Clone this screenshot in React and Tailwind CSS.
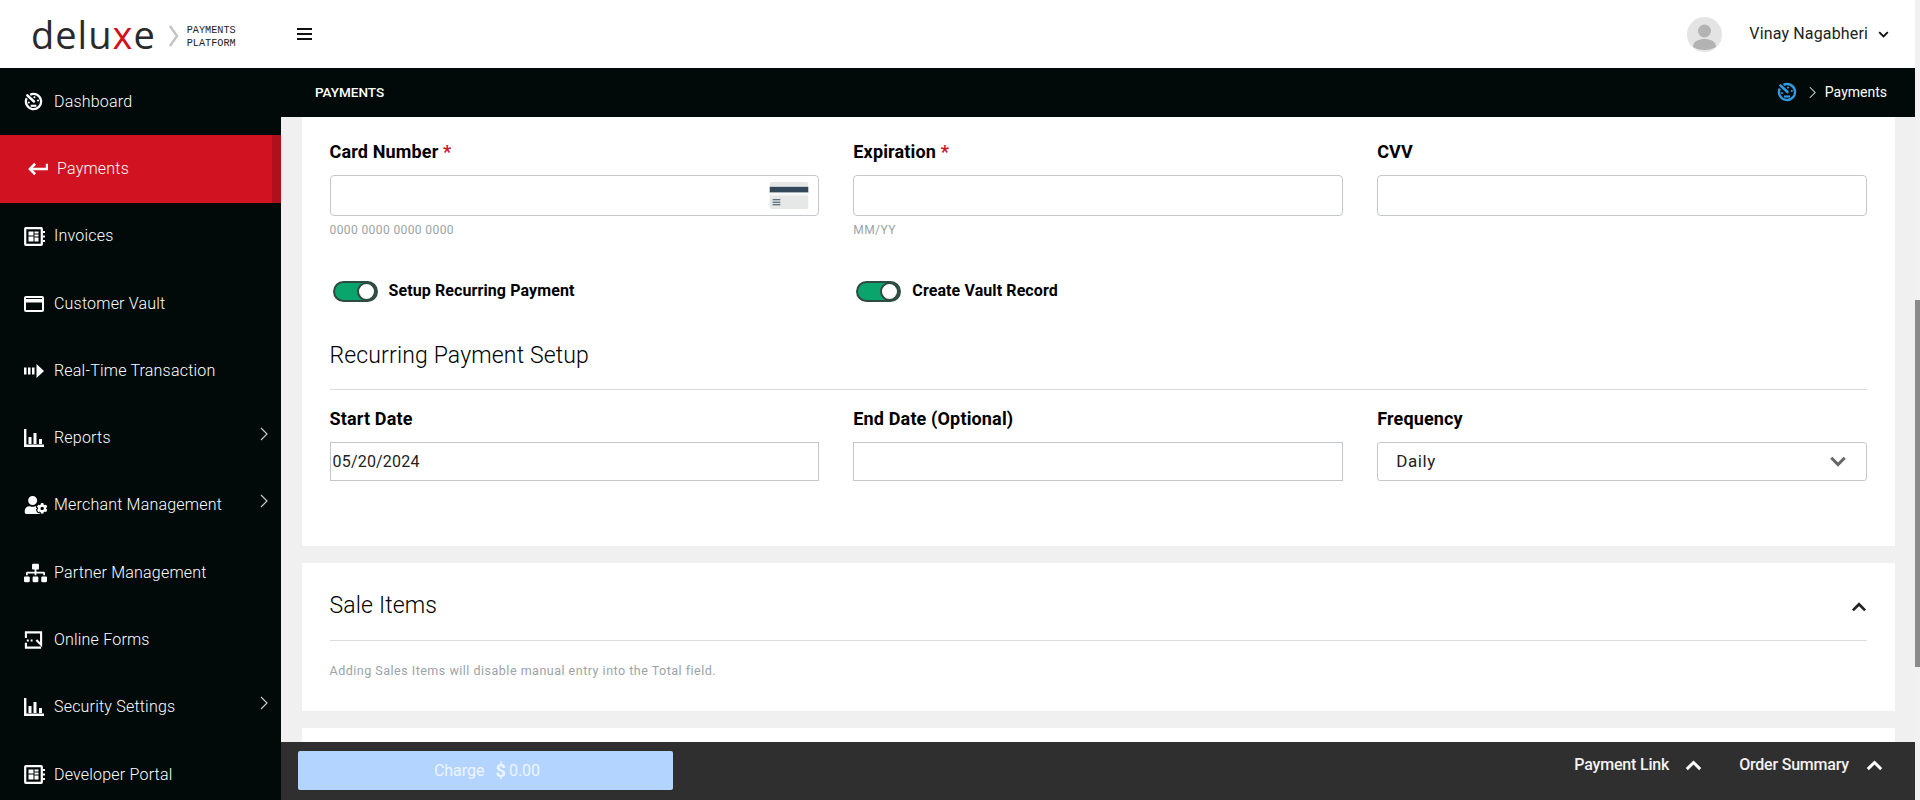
import { FaUserCog, FaSitemap } from "react-icons/fa";

const DashIcon = ({ className }) => (
    <svg viewBox="0 0 20 20" className={className} fill="none">
        <path d="M6.5 2.8A8 8 0 1 1 2.8 6.5" stroke="currentColor" strokeWidth="2.4" />
        <path d="M3.5 3.5l7 6.5" stroke="currentColor" strokeWidth="2.6" strokeLinecap="round" />
        <circle cx="11" cy="5.5" r="1.1" fill="currentColor" />
        <circle cx="14.8" cy="9" r="1.1" fill="currentColor" />
        <circle cx="5" cy="11" r="1.1" fill="currentColor" />
        <path d="M7 14.5h6" stroke="currentColor" strokeWidth="2.2" />
    </svg>
);

const ReturnIcon = () => (
    <svg viewBox="0 0 22 14" className="w-[21px] h-[14px]" fill="none" stroke="currentColor" strokeWidth="2.6">
        <path d="M21 1.5v5.5H3" />
        <path d="M8.5 1.5L3 7l5.5 5.5" />
    </svg>
);

const InvoiceIcon = () => (
    <svg viewBox="0 0 21 19" className="w-[21px] h-[19px]" fill="none">
        <rect x="1.2" y="1.2" width="16.6" height="16.6" rx="0.5" stroke="currentColor" strokeWidth="2.2" />
        <path d="M4.5 4.5h5v4h-5zM10.5 4.5h4v2h-4zM10.5 7.5h4v2h-4zM4.5 9.5h5v5h-5zM10.5 10.5h4v4h-4z" fill="currentColor" />
        <path d="M19 4h2v2h-2zM19 8.5h2v2h-2zM19 13h2v2h-2z" fill="currentColor" />
    </svg>
);

const CardIcon = () => (
    <svg viewBox="0 0 20 16" className="w-5 h-4" fill="none">
        <rect x="1" y="1" width="18" height="14" rx="1" stroke="currentColor" strokeWidth="2" />
        <rect x="1" y="3" width="18" height="3.5" fill="currentColor" />
    </svg>
);

const RealTimeIcon = () => (
    <svg viewBox="0 0 20 14" className="w-5 h-[14px]" fill="currentColor">
        <path d="M0 3.5h2.5v7H0zM4 3.5h2.5v7H4zM8 3.5h2.5v7H8zM12.5 0L20 7l-7.5 7z" />
    </svg>
);

const BarsIcon = () => (
    <svg viewBox="0 0 20 18" className="w-5 h-[18px]" fill="currentColor">
        <path d="M0 0h2.4v15.6H20V18H0zM4.5 8h3v7h-3zM9.5 4h3v11h-3zM15 10h3v5h-3z" />
    </svg>
);

const FormIcon = () => (
    <svg viewBox="0 0 20 20" className="w-[19px] h-5" fill="none" stroke="currentColor" strokeWidth="2.2">
        <path d="M2 8V2h16v13l-5-5" />
        <path d="M2 13v5h16" />
        <path d="M3 10.5h2M7 10.5h2" />
    </svg>
);

const Chevron = ({ className }) => (
    <svg viewBox="0 0 8 14" className={className} fill="none" stroke="currentColor" strokeWidth="1.2">
        <path d="M1 1l6 6-6 6" />
    </svg>
);

const Caret = ({ up, className }) => (
    <svg viewBox="0 0 14 9" className={className} fill="none" stroke="currentColor" strokeWidth="2.4">
        <path d={up ? "M1.5 7.5L7 2l5.5 5.5" : "M1.5 1.5L7 7l5.5-5.5"} />
    </svg>
);

const menu = [
    { label: "Dashboard", icon: <DashIcon className="w-[19px] h-[19px]" /> },
    { label: "Payments", icon: <ReturnIcon />, active: true },
    { label: "Invoices", icon: <InvoiceIcon /> },
    { label: "Customer Vault", icon: <CardIcon /> },
    { label: "Real-Time Transaction", icon: <RealTimeIcon /> },
    { label: "Reports", icon: <BarsIcon />, more: true },
    { label: "Merchant Management", icon: <FaUserCog className="w-6 h-[18px]" />, more: true },
    { label: "Partner Management", icon: <FaSitemap className="w-[23px] h-5" /> },
    { label: "Online Forms", icon: <FormIcon /> },
    { label: "Security Settings", icon: <BarsIcon />, more: true },
    { label: "Developer Portal", icon: <InvoiceIcon /> },
];

function Sidebar() {
    return (
        <aside className="w-[281px] shrink-0 bg-[#010a08] text-white overflow-hidden">
            {menu.map((item) => (
                <div
                    key={item.label}
                    className={
                        item.active
                            ? "h-[67.3px] flex items-center bg-[#d11220] border-r-[9px] border-[#b0101c] pl-[27px] gap-[9px] text-[16px] text-white"
                            : "h-[67.3px] flex items-center pl-6 pr-[13px] text-[16px]"
                    }
                >
                    {item.active ? (
                        item.icon
                    ) : (
                        <span className="w-[30px] flex items-center">{item.icon}</span>
                    )}
                    <span className="font-light tracking-[0.2px]">{item.label}</span>
                    {item.more && <Chevron className="ml-auto w-[8px] h-[14px] text-[#c8c8c8] -mt-2" />}
                </div>
            ))}
        </aside>
    );
}

function Field({ label, required, hint, children }) {
    return (
        <div>
            <div className="h-[24px] leading-[24px] -mt-[1px] mb-[1px] text-[18px] font-bold text-black tracking-[0.15px]">
                {label} {required && <span className="text-[#d11220]">*</span>}
            </div>
            {children}
            {hint && <div className="mt-[5px] text-[12px] tracking-[0.4px] text-[#9aa3a8]">{hint}</div>}
        </div>
    );
}

function Toggle({ label }) {
    return (
        <div className="flex items-center gap-[11px] pl-[3px]">
            <div className="w-[45px] h-[21px] rounded-full bg-[#0aa56c] border-2 border-[#2f4a42] flex items-center justify-end">
                <div className="w-[19px] h-[19px] rounded-full bg-white border-2 border-[#2f4a42]" />
            </div>
            <span className="text-[16px] font-bold text-black tracking-[0.1px]">{label}</span>
        </div>
    );
}

function PaymentCard() {
    return (
        <section className="bg-white h-[429px] pl-[27.5px] pr-7 pt-[24px]">
            <div className="grid grid-cols-3 gap-x-[34px]">
                <Field label="Card Number" required hint="0000 0000 0000 0000">
                    <div className="mt-[11px] h-[41px] border border-[#c4c8cc] rounded flex items-center justify-end pr-[9px]">
                        <svg viewBox="0 0 40 28" className="w-[40px] h-[27px]">
                            <rect width="40" height="28" rx="2" fill="#e6e8e8" />
                            <rect y="5" width="40" height="6" fill="#33475b" />
                            <rect y="11" width="40" height="3" fill="#f7f7f7" />
                            <path d="M3 18h8v1H3zM3 20.5h8v1H3zM3 23h8v1H3z" fill="#33475b" />
                        </svg>
                    </div>
                </Field>
                <Field label="Expiration" required hint="MM/YY">
                    <div className="mt-[11px] h-[41px] border border-[#c4c8cc] rounded" />
                </Field>
                <Field label="CVV">
                    <div className="mt-[11px] h-[41px] border border-[#c4c8cc] rounded" />
                </Field>
            </div>
            <div className="grid grid-cols-3 gap-x-[34px] mt-[40px]">
                <Toggle label="Setup Recurring Payment" />
                <Toggle label="Create Vault Record" />
            </div>
            <h2 className="mt-[37px] text-[23px] leading-[32px] font-light text-black tracking-[0.15px] pb-[17px] border-b border-[#dcdcdc]">
                Recurring Payment Setup
            </h2>
            <div className="grid grid-cols-3 gap-x-[34px] mt-[18px]">
                <Field label="Start Date">
                    <div className="mt-[11px] h-[39px] border border-[#c4c8cc] flex items-center pl-[2px] text-[16px] text-[#222] tracking-[0.2px]">
                        05/20/2024
                    </div>
                </Field>
                <Field label="End Date (Optional)">
                    <div className="mt-[11px] h-[39px] border border-[#c4c8cc]" />
                </Field>
                <Field label="Frequency">
                    <div className="mt-[11px] h-[39px] border border-[#c4c8cc] rounded-[3px] flex items-center justify-between pl-[18px] pr-[19px] text-[17px] text-[#222] tracking-[0.6px]">
                        Daily
                        <Caret className="w-[18px] h-[11px] text-[#666]" />
                    </div>
                </Field>
            </div>
        </section>
    );
}

function SaleItemsCard() {
    return (
        <section className="bg-white h-[148px] mt-[17px] pl-[27.5px] pr-7">
            <div className="h-[78px] flex items-center justify-between border-b border-[#dcdcdc] pt-[10px]">
                <h2 className="text-[23px] font-light text-black tracking-[0.15px]">Sale Items</h2>
                <Caret up className="w-[16px] h-[10px] text-[#222]" />
            </div>
            <p className="mt-[21px] text-[12.5px] tracking-[0.5px] text-[#9aa3a8]">
                Adding Sales Items will disable manual entry into the Total field.
            </p>
        </section>
    );
}

function BottomBar() {
    return (
        <footer className="h-[58px] shrink-0 bg-[#2f2f2f] flex items-start pl-[17px] pr-[32px] pt-[9px]">
            <button className="w-[375px] h-[39px] bg-[#b3d4ff] rounded-[2px] pl-[3px] flex items-center justify-center gap-[11px] text-[16px] text-[#eef5ff]">
                Charge
                <span className="flex items-center gap-[3px]">
                    <b className="text-[18px]">$</b> 0.00
                </span>
            </button>
            <div className="ml-auto flex items-center text-[16px] font-medium tracking-[-0.2px] text-[#f2f2f2] h-[28px]">
                Payment Link
                <Caret up className="w-[17px] h-[11px] ml-[16px] mr-[37px] text-white" />
                Order Summary
                <Caret up className="w-[17px] h-[11px] ml-[17px] text-white" />
            </div>
        </footer>
    );
}

export default function App() {
    return (
        <div className="flex h-screen w-full overflow-hidden bg-[#f0f0f0] font-['Roboto',sans-serif]">
            <div className="flex-1 min-w-0 flex flex-col">
                <header className="h-[68px] shrink-0 bg-white flex items-center">
                    <div className="w-[297px] flex items-center pl-[31px]">
                        <div className="font-['Open_Sans',sans-serif] font-normal text-[38px] leading-[40px] tracking-[1px] text-[#2a2a2a]">
                            delu<span className="text-[#d11220]">x</span>e
                        </div>
                        <svg viewBox="0 0 10 22" className="w-[10px] h-[22px] ml-[13px] mt-[4px] text-[#c4c4c4]" fill="none" stroke="currentColor" strokeWidth="2.4">
                            <path d="M1 1l7 10-7 10" />
                        </svg>
                        <div className="ml-[8px] mt-[5px] font-['Liberation_Mono',monospace] text-[10.2px] leading-[13px] text-[#222]">
                            PAYMENTS
                            <br />
                            PLATFORM
                        </div>
                    </div>
                    <div className="w-[15px] flex flex-col gap-[3px]">
                        <div className="h-[2px] bg-[#111]" />
                        <div className="h-[2px] bg-[#111]" />
                        <div className="h-[2px] bg-[#111]" />
                    </div>
                    <div className="ml-auto flex items-center pr-[26px]">
                        <div className="w-[35px] h-[35px] rounded-full bg-[#e4e4e4] flex items-center justify-center">
                            <svg viewBox="0 0 35 35" className="w-[35px] h-[35px]" fill="#b3b3b3">
                                <circle cx="17.5" cy="14" r="6.5" />
                                <path d="M6 30c0-6 6-8 11.5-8S29 24 29 30c-3 2-7 3-11.5 3S9 32 6 30z" />
                            </svg>
                        </div>
                        <span className="ml-[27px] text-[16px] text-[#222] tracking-[0.15px]">Vinay Nagabheri</span>
                        <Caret className="w-[11px] h-[7px] ml-[10px] text-[#111]" />
                    </div>
                </header>
                <div className="flex-1 min-h-0 flex">
                    <Sidebar />
                    <div className="flex-1 min-w-0 flex flex-col">
                        <div className="h-[49px] shrink-0 bg-[#010a08] flex items-center justify-between pl-[34px] pr-[28px] text-white">
                            <span className="text-[13.5px] font-medium -mt-[1px]">PAYMENTS</span>
                            <div className="flex items-center text-[14px] -mt-[1px]">
                                <DashIcon className="w-[20px] h-[20px] text-[#2f9be0]" />
                                <Chevron className="w-[7px] h-[13px] ml-[12px] mr-[9px] text-[#ddd]" />
                                Payments
                            </div>
                        </div>
                        <main className="flex-1 min-h-0 overflow-hidden pl-[21px] pr-[20px]">
                            <PaymentCard />
                            <SaleItemsCard />
                            <section className="bg-white h-[40px] mt-[17px]" />
                        </main>
                        <BottomBar />
                    </div>
                </div>
            </div>
            <div className="w-[5px] shrink-0 bg-[#f1f1f1] pt-[300px]">
                <div className="h-[367px] bg-[#8a8a8a]" />
            </div>
        </div>
    );
}
